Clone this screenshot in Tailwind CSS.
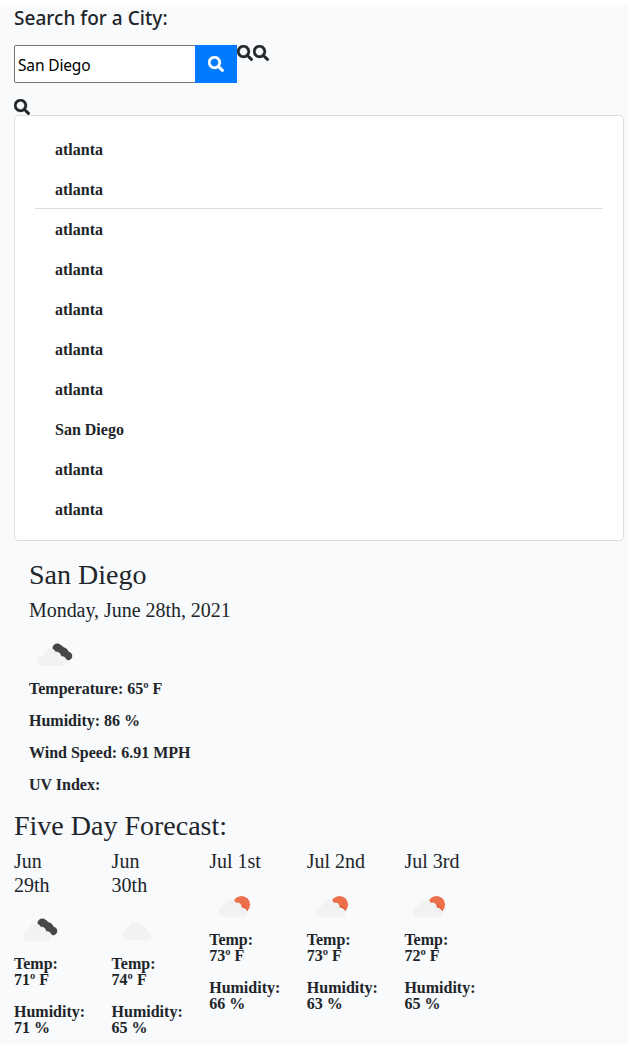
<!DOCTYPE html>
<html lang="en">
<head>
<meta charset="utf-8">
<title>Weather Dashboard</title>
<script src="https://cdn.jsdelivr.net/npm/@tailwindcss/browser@4"></script>
</head>
<body class="bg-white pt-[5px] text-[#212529] font-['Liberation_Serif',serif]">
<svg class="hidden">
  <symbol id="search" viewBox="0 0 512 512"><path fill="currentColor" stroke="currentColor" stroke-width="10" d="M505 442.700L405.300 343c-4.500-4.500-10.600-7-17-7H372c27.600-35.300 44-79.700 44-128C416 93.100 322.900 0 208 0S0 93.100 0 208s93.100 208 208 208c48.300 0 92.700-16.400 128-44v16.300c0 6.400 2.500 12.500 7 17l99.700 99.700c9.400 9.400 24.600 9.400 33.900 0l28.300-28.300c9.400-9.400 9.400-24.600.1-34zM208 336c-70.700 0-128-57.200-128-128 0-70.700 57.200-128 128-128 70.700 0 128 57.200 128 128 0 70.700-57.200 128-128 128z"/></symbol>
  <symbol id="broken" viewBox="0 0 50 50">
    <g fill="#484848"><circle cx="28.300" cy="18.500" r="4.900"/><circle cx="34.500" cy="22.400" r="4.800"/><circle cx="39" cy="26" r="4.300"/><path d="M27 21l5-6 8 7 1 7-4 1z"/></g>
    <path fill="#f2f2f2" stroke="#f8fafc" stroke-width=".5" d="M13.500 36.300a5.200 5.200 0 0 1-.3-10.400 2 2 0 0 1 1.500-1.300 6.200 6.200 0 0 1 11.800-2.600 4.500 4.500 0 0 1 5.400 4.600 4.800 4.800 0 0 1 5.800 4.700 5 5 0 0 1-3.700 5z"/>
  </symbol>
  <symbol id="cloud" viewBox="0 0 50 50"><path fill="#f2f2f2" d="M15.500 35a4.900 4.900 0 0 1-.7-10 2 2 0 0 1 1.900-1.500 6.200 6.200 0 0 1 12.100-2 4.600 4.600 0 0 1 6 4.700 4.500 4.500 0 0 1 1.500 8.800z"/></symbol>
  <symbol id="sun" viewBox="0 0 50 50">
    <circle cx="32.500" cy="23.600" r="8.600" fill="#ed6f4b"/>
    <path fill="#e0532e" d="M25 21l2-.2 2.500 1 2.500 1.500 2.500 2 2.500 1.500 2 3-8 3z"/>
    <path fill="#f2f2f2" d="M14 36a5.200 5.200 0 0 1-.6-10.300 2 2 0 0 1 2-1.500 6.200 6.200 0 0 1 11.600-2.500 4.600 4.600 0 0 1 5.800 4.800 4 4 0 0 1 3.800 1.500 4.800 4.800 0 0 1 2 4.300 4.500 4.500 0 0 1-4.500 3.700z"/>
    <path fill="#f8fafc" d="M38.900 30.300l3 0 0 5-3.800 0z"/>
  </symbol>
</svg>
<main class="h-[1039px] overflow-hidden bg-[#f8fafc] pl-[14px] pr-1">
  <h5 class="h-10 w-max pt-px font-['Noto_Sans',sans-serif] text-[19px] leading-6 font-medium tracking-[0.04px]">Search for a City:</h5>
  <div class="flex h-[54px] items-start">
    <input type="text" value="San Diego" class="h-[38px] w-[182px] rounded-l-[2px] border border-[#767676] bg-white px-[3px] pt-px font-['Noto_Sans',sans-serif] text-[15.500px] tracking-[-0.15px] text-black">
    <button class="-ml-px flex h-[38px] w-[42px] items-center justify-center bg-[#007bff] text-white"><svg class="size-4"><use href="#search"/></svg></button>
    <svg class="size-4"><use href="#search"/></svg>
    <svg class="size-4"><use href="#search"/></svg>
  </div>
  <svg class="block size-4"><use href="#search"/></svg>
  <ul class="h-[426px] rounded-[4px] border border-[#dcdddf] bg-white px-5 pt-[13px] font-bold leading-[42px] *:h-10 *:pl-5">
    <li>atlanta</li>
    <li class="border-b border-[#dcdddf]">atlanta</li>
    <li>atlanta</li>
    <li>atlanta</li>
    <li>atlanta</li>
    <li>atlanta</li>
    <li>atlanta</li>
    <li>San Diego</li>
    <li>atlanta</li>
    <li>atlanta</li>
  </ul>
  <section class="h-[267px] pt-4 pl-[15px]">
    <h3 class="mb-[5px] text-[28px] leading-[36px]">San Diego</h3>
    <h5 class="mb-2 text-[20px] leading-6 tracking-[-0.04px]">Monday, June 28th, 2021</h5>
    <svg class="mb-px block size-[50px]"><use href="#broken"/></svg>
    <div class="flex flex-col gap-4 font-bold leading-4">
      <p>Temperature: 65º F</p>
      <p>Humidity: 86 %</p>
      <p>Wind Speed: 6.91 MPH</p>
      <p>UV Index:</p>
    </div>
  </section>
  <h3 class="mb-[5px] text-[28px] leading-[36px]">Five Day Forecast:</h3>
  <section class="grid grid-cols-[repeat(5,97.600px)] items-start font-bold leading-4">
    <article>
      <h5 class="mb-2 text-[20px] leading-6 font-normal">Jun<br>29th</h5>
      <svg class="mb-px block size-[50px]"><use href="#broken"/></svg>
      <p class="mb-4">Temp:<br>71º F</p><p>Humidity:<br>71 %</p>
    </article>
    <article>
      <h5 class="mb-2 text-[20px] leading-6 font-normal">Jun<br>30th</h5>
      <svg class="mb-px block size-[50px]"><use href="#cloud"/></svg>
      <p class="mb-4">Temp:<br>74º F</p><p>Humidity:<br>65 %</p>
    </article>
    <article>
      <h5 class="mb-2 text-[20px] leading-6 font-normal">Jul 1st</h5>
      <svg class="mb-px block size-[50px]"><use href="#sun"/></svg>
      <p class="mb-4">Temp:<br>73º F</p><p>Humidity:<br>66 %</p>
    </article>
    <article>
      <h5 class="mb-2 text-[20px] leading-6 font-normal">Jul 2nd</h5>
      <svg class="mb-px block size-[50px]"><use href="#sun"/></svg>
      <p class="mb-4">Temp:<br>73º F</p><p>Humidity:<br>63 %</p>
    </article>
    <article>
      <h5 class="mb-2 text-[20px] leading-6 font-normal">Jul 3rd</h5>
      <svg class="mb-px block size-[50px]"><use href="#sun"/></svg>
      <p class="mb-4">Temp:<br>72º F</p><p>Humidity:<br>65 %</p>
    </article>
  </section>
</main>
</body>
</html>
